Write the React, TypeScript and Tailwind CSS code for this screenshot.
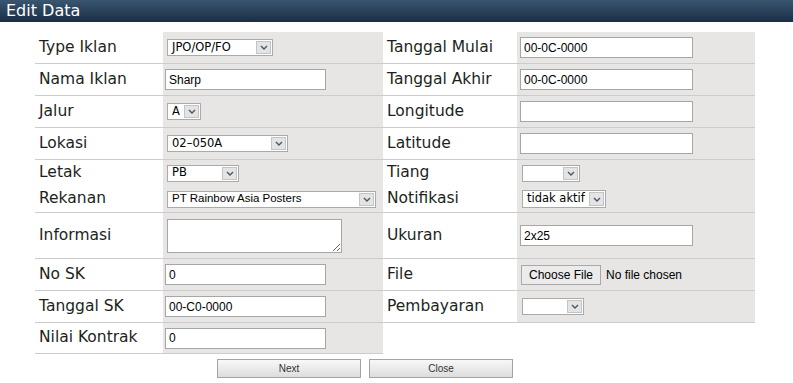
const label = "font-['DejaVu_Sans',Verdana,sans-serif] text-[15.5px] text-[#1c1f1c]";
const sans = "font-['Liberation_Sans',Arial,sans-serif]";
const verdana = "font-['DejaVu_Sans',Verdana,sans-serif] text-[11.5px]";

const Chevron = () => (
  <svg width="8" height="5" viewBox="0 0 8 5">
    <path d="M1 1l3 3 3-3" fill="none" stroke="#45566a" strokeWidth="1.4" />
  </svg>
);

function Select({
  w,
  value = "",
  h = "h-[17px]",
  font = verdana,
}: {
  w: string;
  value?: string;
  h?: string;
  font?: string;
}) {
  return (
    <div className={`${w} ${h} ml-[2px] flex items-stretch border border-[#aaaaaa] bg-white`}>
      <span className={`flex-1 pl-[4px] flex items-center ${font} text-black leading-none whitespace-nowrap overflow-hidden`}>
        {value}
      </span>
      <span className="w-[15px] m-[1px] flex items-center justify-center bg-[#e4e4e4] border border-[#c4c4c4]">
        <Chevron />
      </span>
    </div>
  );
}

function Text({ value = "", w = "w-[161px]" }: { value?: string; w?: string }) {
  return (
    <input
      readOnly
      defaultValue={value}
      className={`${w} h-[21px] border border-[#a6a6a6] bg-white px-[3px] ${sans} text-[12px] text-black outline-none`}
    />
  );
}

type RowProps = {
  h: string;
  line?: boolean;
  l: string;
  lc: React.ReactNode;
  r?: string;
  rc?: React.ReactNode;
  last?: boolean;
};

function Row({ h, line = true, l, lc, r = "", rc = null, last = false }: RowProps) {
  const b = line ? "border-b border-[#cccccc]" : "";
  return (
    <>
      <div className={`${h} ${b} flex items-center pl-[4px] ${label}`}>{l}</div>
      <div className={`${h} ${b} flex items-center pl-[2px] bg-[#e7e6e4]`}>{lc}</div>
      <div className={`${h} ${last ? "" : b} flex items-center pl-[4px] ${label}`}>{r}</div>
      <div className={`${h} ${last ? "" : b} flex items-center pl-[3px] ${last ? "" : "bg-[#e7e6e4]"}`}>{rc}</div>
    </>
  );
}

export default function App() {
  return (
    <div className="w-[793px] h-[383px] bg-white overflow-hidden">
      <div className="h-[22px] bg-gradient-to-b from-[#3a5670] to-[#1a2e45] pl-[6px] font-['DejaVu_Sans',Verdana,sans-serif] text-[16px] leading-[21px] text-white">
        Edit Data
      </div>

      <div className="ml-[35px] mt-[10px] grid grid-cols-[128px_220px_134px_238px]">
        <Row h="h-[32px]" l="Type Iklan" lc={<Select w="w-[106px]" value="JPO/OP/FO" />} r="Tanggal Mulai" rc={<Text value="00-0C-0000" w="w-[173px]" />} />
        <Row h="h-[32px]" l="Nama Iklan" lc={<Text value="Sharp" />} r="Tanggal Akhir" rc={<Text value="00-0C-0000" w="w-[173px]" />} />
        <Row h="h-[32px]" l="Jalur" lc={<Select w="w-[34px]" value="A" />} r="Longitude" rc={<Text w="w-[173px]" />} />
        <Row h="h-[32px]" l="Lokasi" lc={<Select w="w-[121px]" value="02–050A" />} r="Latitude" rc={<Text w="w-[173px]" />} />
        <Row h="h-[26px]" line={false} l="Letak" lc={<Select w="w-[72px]" value="PB" />} r="Tiang" rc={<Select w="w-[58px]" />} />
        <Row
          h="h-[27px]"
          l="Rekanan"
          lc={<Select w="w-[209px]" value="PT Rainbow Asia Posters" font={`${sans} text-[11.5px]`} />}
          r="Notifikasi"
          rc={<Select w="w-[84px]" value="tidak aktif" h="h-[18px]" />}
        />
        <Row
          h="h-[46px]"
          l="Informasi"
          lc={
            <textarea
              readOnly
              className="ml-[2px] w-[175px] h-[34px] border border-[#a6a6a6] bg-white outline-none"
            />
          }
          r="Ukuran"
          rc={<Text value="2x25" w="w-[173px]" />}
        />
        <Row
          h="h-[32px]"
          l="No SK"
          lc={<Text value="0" />}
          r="File"
          rc={
            <div className={`flex items-center ${sans} text-[12px] text-black`}>
              <span className="ml-[1px] h-[20px] w-[80px] flex items-center justify-center border border-[#a9a9a9] bg-[#ebebeb]">
                Choose File
              </span>
              <span className="ml-[5px]">No file chosen</span>
            </div>
          }
        />
        <Row h="h-[32px]" l="Tanggal SK" lc={<Text value="00-C0-0000" />} r="Pembayaran" rc={<Select w="w-[62px]" />} />
        <Row h="h-[31px]" l="Nilai Kontrak" lc={<Text value="0" />} last />
      </div>

      <div className={`flex gap-[8px] pl-[217px] mt-[5px] ${sans} text-[10px] text-[#333]`}>
        <button className="w-[144px] h-[19px] border border-[#a3a3a3] bg-gradient-to-b from-[#f8f8f8] to-[#dddddd]">
          Next
        </button>
        <button className="w-[144px] h-[19px] border border-[#a3a3a3] bg-gradient-to-b from-[#f8f8f8] to-[#dddddd]">
          Close
        </button>
      </div>
    </div>
  );
}
